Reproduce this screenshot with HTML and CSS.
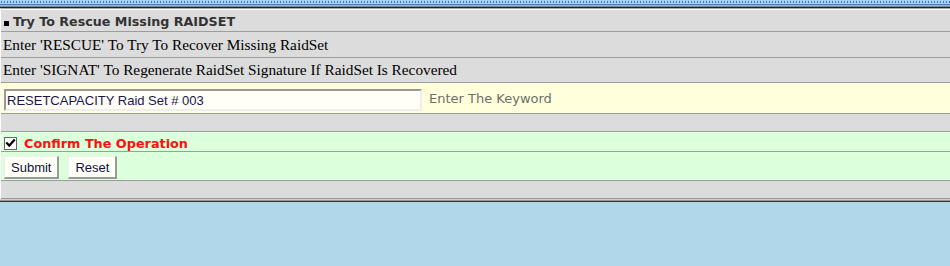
FILE: index.html
```html
<!DOCTYPE html>
<html>
<head>
<meta charset="utf-8">
<link rel="stylesheet" href="styles.css">
</head>
<body>
<div class="frame-top"></div>
<div class="panel">
  <div class="row head"><span class="bullet"></span>Try To Rescue Missing RAIDSET</div>
  <div class="row info first">Enter 'RESCUE' To Try To Recover Missing RaidSet</div>
  <div class="row info">Enter 'SIGNAT' To Regenerate RaidSet Signature If RaidSet Is Recovered</div>
  <div class="row keyrow">
    <input class="keyinput" type="text" value="RESETCAPACITY Raid Set # 003">
    <span class="hint">Enter The Keyword</span>
  </div>
  <div class="row spacer"></div>
  <div class="row confirm">
    <span class="check"><svg width="11" height="11" viewBox="0 0 11 11"><path d="M2 5.2 L4.3 7.6 L9 2.4" fill="none" stroke="#000" stroke-width="2.2" stroke-linecap="square"/></svg></span>
    <span class="confirm-text">Confirm The Operation</span>
  </div>
  <div class="row buttons">
    <button class="btn">Submit</button>
    <button class="btn">Reset</button>
  </div>
  <div class="row spacer last"></div>
</div>
<div class="frame-bottom"></div>
</body>
</html>
```
FILE: styles.css
```css
html, body {
  margin: 0;
  padding: 0;
  background: #b1d7ea;
  width: 950px;
  height: 266px;
  overflow: hidden;
}
.frame-top {
  height: 4px;
  background-color: #a6d0f7;
  background-image: radial-gradient(circle, #4a78b8 0.7px, transparent 0.9px);
  background-size: 3px 4px;
  background-position: 0 0;
  border-bottom: 1px solid #4f7fc0;
  box-shadow: 0 1px 0 #8fb4dc, 0 2px 0 #7a8a9a, 0 3px 0 #222;
  margin-bottom: 3px;
}
.panel {
  background: #dcdcdc;
  border-top: 1px solid #aaa;
  border-left: 1px solid #fff;
}
.row {
  display: flex;
  align-items: center;
  border-bottom: 1px solid #9d9d9d;
  box-sizing: border-box;
}
.head {
  border-top: 1px solid #fff;
  height: 23px;
  padding-left: 3px;
  padding-top: 2px;
  font-family: "DejaVu Sans", Verdana, sans-serif;
  font-weight: bold;
  font-size: 12.7px;
  color: #333;
}
.bullet {
  width: 5px;
  height: 5px;
  background: #000;
  margin-right: 4px;
  margin-top: 3px;
}
.info {
  height: 25px;
  padding-left: 2px;
  font-family: "Liberation Serif", "Times New Roman", serif;
  font-size: 15.3px;
  color: #000;
}
.info.first {
  height: 26px;
}
.keyrow {
  height: 31px;
  background: #ffffdc;
  padding-left: 3px;
}
.keyinput {
  width: 418px;
  height: 22px;
  box-sizing: border-box;
  margin: 4px 0 0 0;
  padding: 0 0 0 1px;
  border-style: solid;
  border-width: 2px;
  border-color: #999 #eee #eee #999;
  background: #fffff6;
  font-family: "Liberation Sans", Arial, sans-serif;
  font-size: 13px;
  color: #1c1450;
  outline: none;
}
.hint {
  margin-left: 7px;
  font-family: "DejaVu Sans", Verdana, sans-serif;
  font-size: 13px;
  color: #6e6e6e;
}
.spacer {
  height: 18px;
}
.confirm {
  height: 20px;
  background: #dcffdc;
  padding-left: 3px;
  padding-top: 3px;
}
.check {
  display: flex;
  width: 11px;
  height: 11px;
  border: 1px solid #666;
  background: #fff;
  margin-right: 7px;
}
.confirm-text {
  font-family: "DejaVu Sans", Verdana, sans-serif;
  font-weight: bold;
  font-size: 12.8px;
  color: #ff1010;
}
.buttons {
  height: 29px;
  background: #dcffdc;
  padding-left: 3px;
  padding-top: 2px;
  gap: 9px;
}
.btn {
  height: 23px;
  margin-top: 1px;
  padding: 0 6px;
  background: #fffff8;
  border-style: solid;
  border-width: 1px 2px 2px 1px;
  border-color: #eee #999 #999 #eee;
  font-family: "Liberation Sans", Arial, sans-serif;
  font-size: 13px;
  color: #101040;
}
.last {
  height: 18px;
  border-bottom: 1px solid #999;
}
.frame-bottom {
  height: 1px;
  background: #cfcfcf;
  border-bottom: 1px solid #999;
  box-shadow: 0 1px 0 #333;
}
```
